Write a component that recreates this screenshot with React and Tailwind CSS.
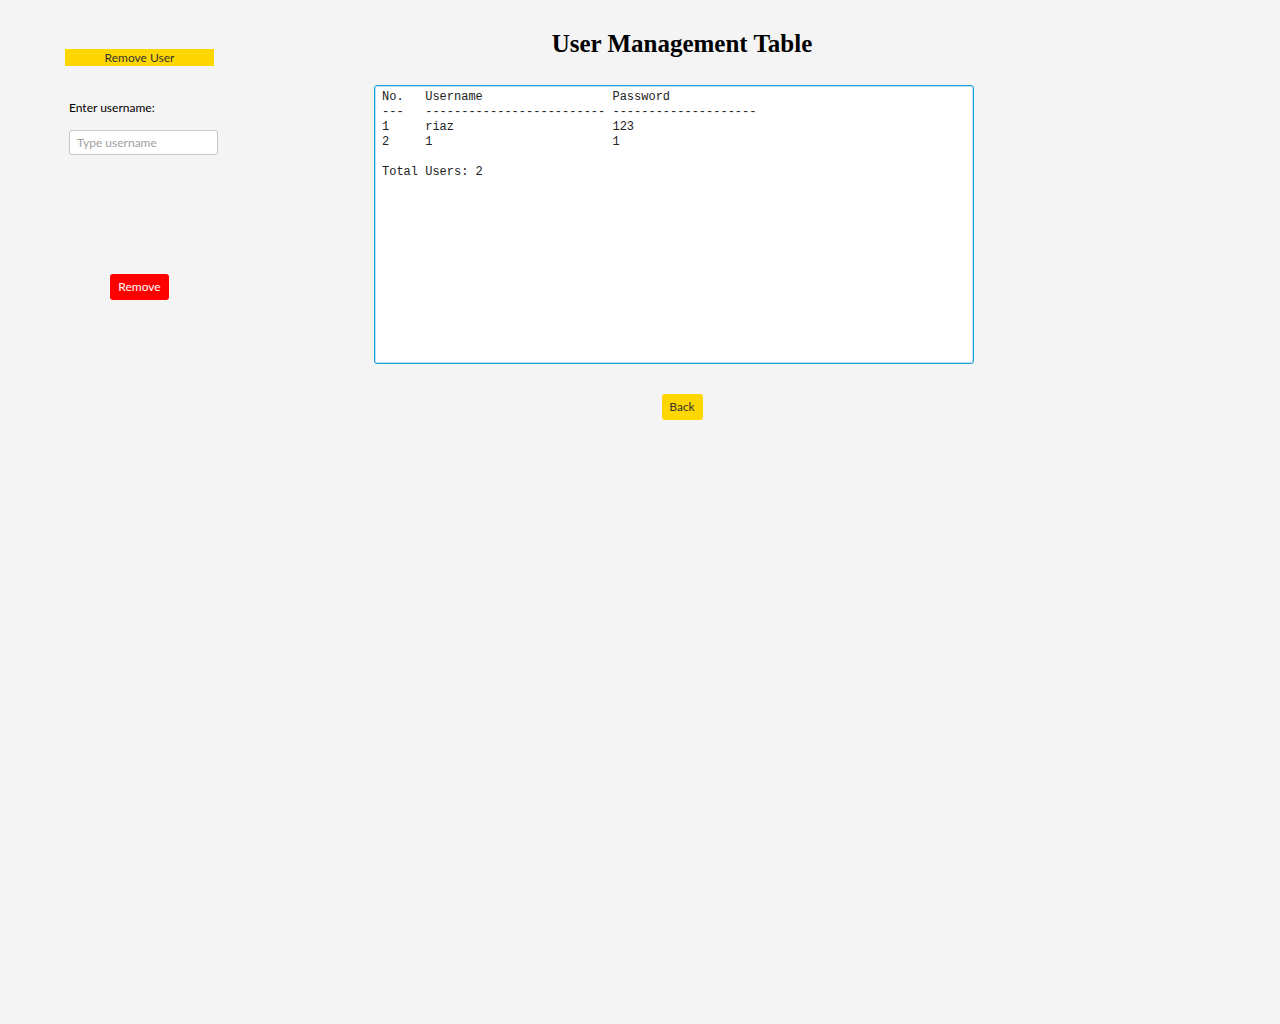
const users = [
  { username: "riaz", password: "123" },
  { username: "1", password: "1" },
];

function pad(s, n) {
  return (s + " ".repeat(n)).slice(0, n);
}

function tableText(rows) {
  const lines = [];
  lines.push(pad("No.", 6) + pad("Username", 26) + "Password");
  lines.push(pad("---", 6) + "-".repeat(25) + " " + "-".repeat(20));
  rows.forEach((u, i) => {
    lines.push(pad(String(i + 1), 6) + pad(u.username, 26) + u.password);
  });
  lines.push("");
  lines.push("Total Users: " + rows.length);
  return lines.join("\n");
}

export default function App() {
  return (
    <div className="min-h-[1024px] w-full bg-[#f4f4f4] flex font-['Lato','Open_Sans',sans-serif] text-[12px]">
      {/* left panel */}
      <div className="ml-[65px] pt-[49px] w-[153px] flex flex-col">
        <div className="w-[149px] h-[17px] bg-[#ffd700] flex items-center justify-center text-[#333] leading-none">
          Remove User
        </div>
        <div className="ml-[4px] mt-[34px] text-black leading-[16px]">Enter username:</div>
        <input
          className="ml-[4px] mt-[14px] w-[149px] h-[25px] rounded-[3px] border border-[#c8c8c8] bg-white px-[7px] text-[12px] text-[#333] placeholder:text-[#a0a0a0] outline-none"
          placeholder="Type username"
        />
        <button className="ml-[45px] mt-[119px] w-[59px] h-[26px] rounded-[3px] bg-[#ff0000] text-white leading-none">
          Remove
        </button>
      </div>

      {/* main panel */}
      <div className="ml-[156px] w-[616px] pt-[29px] flex flex-col items-center">
        <h1 className="font-['Liberation_Serif',serif] font-bold text-[25px] leading-[30px] text-black">
          User Management Table
        </h1>
        <div className="self-start mt-[26px] w-[600px] h-[279px] rounded-[3px] border border-[#1c9fd8] shadow-[inset_0_0_0_1px_#b9e2f4] bg-white">
          <pre className="pl-[7px] pt-[4px] font-['Liberation_Mono','Courier_New',monospace] text-[12px] leading-[15px] text-[#222]">
            {tableText(users)}
          </pre>
        </div>
        <button className="mt-[30px] w-[41px] h-[26px] rounded-[3px] bg-[#ffd700] text-[#333] leading-none">
          Back
        </button>
      </div>
    </div>
  );
}
